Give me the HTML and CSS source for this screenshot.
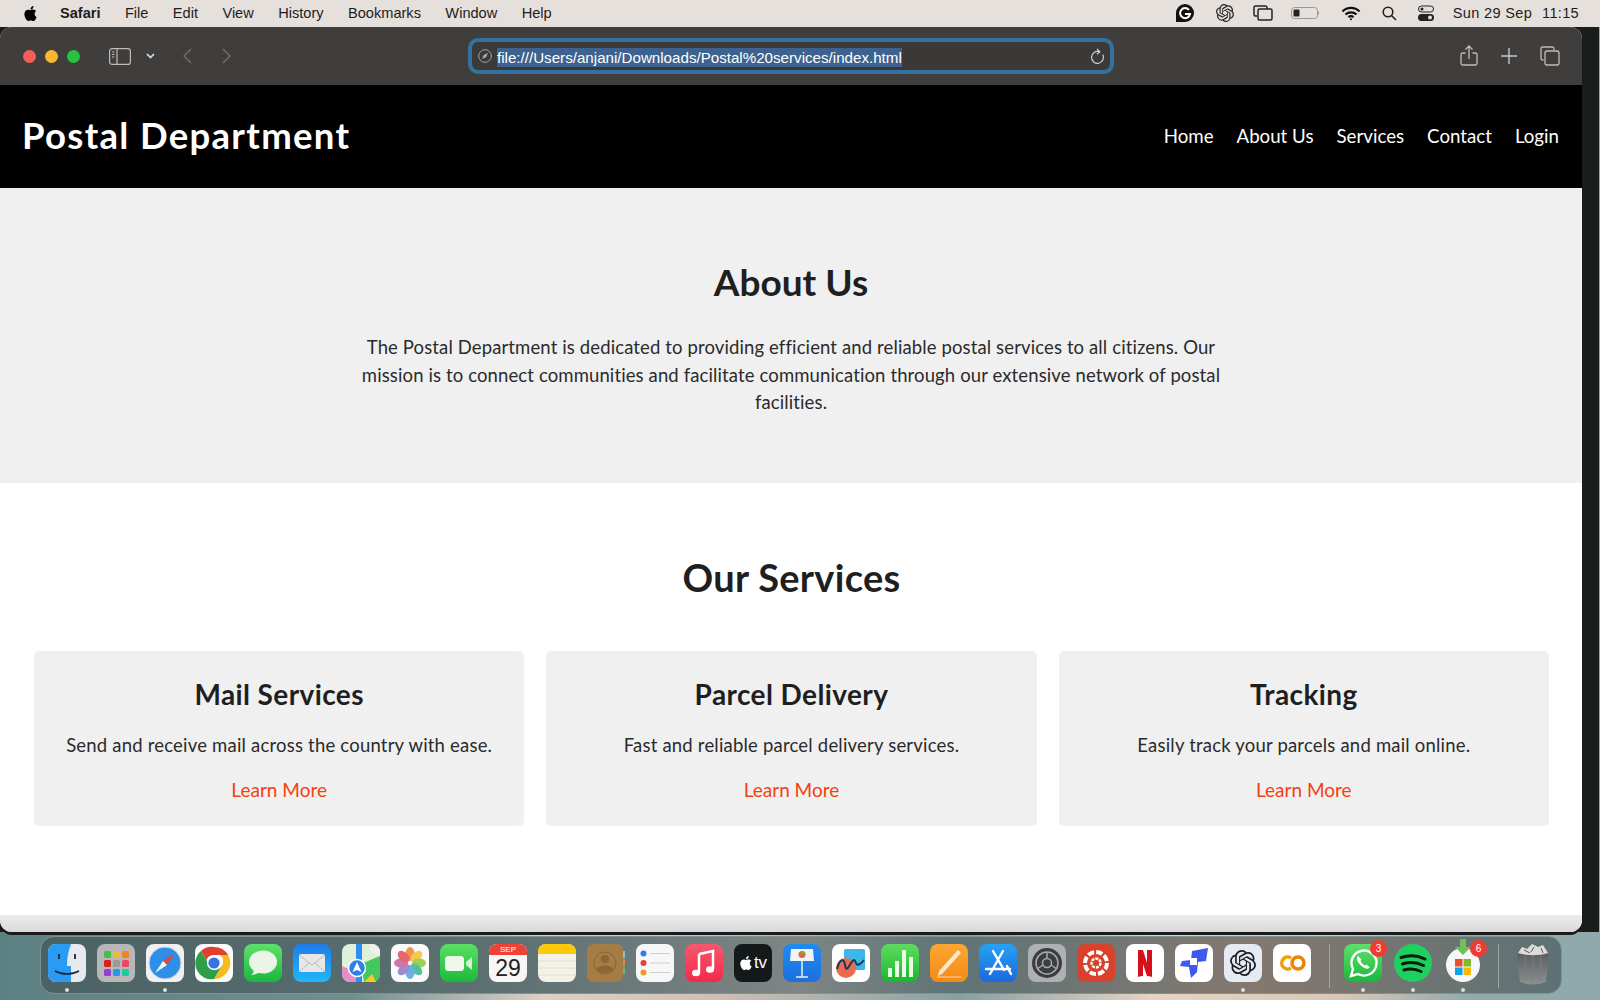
FILE: index.html
```html
<!DOCTYPE html>
<html lang="en">
<head>
    <meta charset="UTF-8">
    <title>Postal Department</title>
    <link rel="stylesheet" href="styles.css">
</head>
<body>
    <header class="menubar">
        <svg class="apple" viewBox="0 0 24 24"><path d="M12.152 6.896c-.948 0-2.415-1.078-3.96-1.04-2.04.027-3.91 1.183-4.961 3.014-2.117 3.675-.546 9.103 1.519 12.09 1.013 1.454 2.208 3.09 3.792 3.039 1.52-.065 2.09-.987 3.935-.987 1.831 0 2.35.987 3.96.948 1.637-.026 2.676-1.48 3.676-2.948 1.156-1.688 1.636-3.325 1.662-3.415-.039-.013-3.182-1.221-3.22-4.857-.026-3.04 2.48-4.494 2.597-4.559-1.429-2.09-3.623-2.324-4.39-2.376-2-.156-3.675 1.09-4.61 1.09zM15.53 3.83c.843-1.012 1.4-2.427 1.245-3.83-1.207.052-2.662.805-3.532 1.818-.78.896-1.454 2.338-1.273 3.714 1.338.104 2.715-.688 3.559-1.701"/></svg>
        <nav class="menus">
            <b>Safari</b><span>File</span><span>Edit</span><span>View</span><span>History</span><span>Bookmarks</span><span>Window</span><span>Help</span>
        </nav>
        <div class="status">
            <svg width="20" height="20" viewBox="0 0 20 20"><path d="M10 1a9 9 0 1 1 0 18H1v-9a9 9 0 0 1 9-9z" fill="#111"/><path d="M14 7a5 5 0 1 0 1 4h-5" fill="none" stroke="#fff" stroke-width="2"/></svg>
            <svg width="18" height="18" viewBox="0 0 24 24" fill="#222"><path d="M22.2819 9.8211a5.9847 5.9847 0 0 0-.5157-4.9108 6.0462 6.0462 0 0 0-6.5098-2.9A6.0651 6.0651 0 0 0 4.9807 4.1818a5.9847 5.9847 0 0 0-3.9977 2.9 6.0462 6.0462 0 0 0 .7427 7.0966 5.98 5.98 0 0 0 .511 4.9107 6.051 6.051 0 0 0 6.5146 2.9001A5.9847 5.9847 0 0 0 13.2599 24a6.0557 6.0557 0 0 0 5.7718-4.2058 5.9894 5.9894 0 0 0 3.9977-2.9001 6.0557 6.0557 0 0 0-.7475-7.0729zm-9.022 12.6081a4.4755 4.4755 0 0 1-2.8764-1.0408l.1419-.0804 4.7783-2.7582a.7948.7948 0 0 0 .3927-.6813v-6.7369l2.02 1.1686a.071.071 0 0 1 .038.052v5.5826a4.504 4.504 0 0 1-4.4945 4.4944zm-9.6607-4.1254a4.4708 4.4708 0 0 1-.5346-3.0137l.142.0852 4.783 2.7582a.7712.7712 0 0 0 .7806 0l5.8428-3.3685v2.3324a.0804.0804 0 0 1-.0332.0615L9.74 19.9502a4.4992 4.4992 0 0 1-6.1408-1.6464zM2.3408 7.8956a4.485 4.485 0 0 1 2.3655-1.9728V11.6a.7664.7664 0 0 0 .3879.6765l5.8144 3.3543-2.0201 1.1685a.0757.0757 0 0 1-.071 0l-4.8303-2.7865A4.504 4.504 0 0 1 2.3408 7.872zm16.5963 3.8558L13.1038 8.364 15.1192 7.2a.0757.0757 0 0 1 .071 0l4.8303 2.7913a4.4944 4.4944 0 0 1-.6765 8.1042v-5.6772a.79.79 0 0 0-.407-.667zm2.0107-3.0231l-.142-.0852-4.7735-2.7818a.7759.7759 0 0 0-.7854 0L9.409 9.2297V6.8974a.0662.0662 0 0 1 .0284-.0615l4.8303-2.7866a4.4992 4.4992 0 0 1 6.6802 4.66zM8.3065 12.863l-2.02-1.1638a.0804.0804 0 0 1-.038-.0567V6.0742a4.4992 4.4992 0 0 1 7.3757-3.4537l-.142.0805L8.704 5.459a.7948.7948 0 0 0-.3927.6813zm1.0976-2.3654l2.602-1.4998 2.6069 1.4998v2.9994l-2.5974 1.4997-2.6067-1.4997Z"/></svg>
            <svg class="status-tabs" width="20" height="18" viewBox="0 0 20 18" fill="none" stroke="#222" stroke-width="1.500"><path d="M4 12H2.500A1.500 1.500 0 0 1 1 10.500v-7A1.500 1.500 0 0 1 2.500 2h10A1.500 1.500 0 0 1 14 3.500V5"/><rect x="5" y="5" width="14" height="11" rx="1.500"/></svg>
            <svg width="29" height="14" viewBox="0 0 29 14"><rect x=".5" y="1.500" width="26" height="11" rx="3" fill="none" stroke="#999"/><rect x="2.500" y="3.500" width="6" height="7" rx="1" fill="#222"/><path d="M27.500 5.500v3" stroke="#999"/></svg>
            <svg width="20" height="15" viewBox="0 0 20 15" fill="none" stroke="#111" stroke-width="2.200"><path d="M1.500 5.500a12 12 0 0 1 17 0M4.500 8.500a8 8 0 0 1 11 0M7.500 11.200a3.500 3.500 0 0 1 5 0"/><circle cx="10" cy="13.300" r="1" fill="#111" stroke="none"/></svg>
            <svg width="15" height="15" viewBox="0 0 15 15" fill="none" stroke="#222" stroke-width="1.600"><circle cx="6" cy="6" r="4.800"/><path d="M9.500 9.500l4.500 4.500"/></svg>
            <svg width="16" height="16" viewBox="0 0 16 16"><rect x=".5" y="1" width="15" height="6" rx="3" fill="none" stroke="#222"/><circle cx="4" cy="4" r="1.500" fill="#222"/><rect y="9" width="16" height="7" rx="3.500" fill="#222"/><circle cx="12" cy="12.500" r="2" fill="#e6e0dc"/></svg>
            <span class="clock"><span>Sun 29 Sep</span><span>11:15</span></span>
        </div>
    </header>

    <main class="desktop">
        <div class="window">
            <div class="toolbar">
                <div class="tool-left">
                    <span class="light red"></span><span class="light yellow"></span><span class="light green"></span>
                    <svg class="sidebar-icon" width="22" height="17" viewBox="0 0 22 17" fill="none" stroke="#bdbcbb" stroke-width="1.200"><rect x=".6" y=".6" width="20.800" height="15.800" rx="2.500"/><path d="M8 .6v15.800M3 4h2.500M3 6.500h2.500M3 9h2.500"/></svg>
                    <svg class="chevron" width="9" height="6" viewBox="0 0 9 6" fill="none" stroke="#ddd" stroke-width="1.700"><path d="M1 1l3.500 3.500L8 1"/></svg>
                    <svg class="back" width="10" height="16" viewBox="0 0 10 16" fill="none" stroke="#6d6c6b" stroke-width="1.500"><path d="M9 1L2 8l7 7"/></svg>
                    <svg class="forward" width="10" height="16" viewBox="0 0 10 16" fill="none" stroke="#6d6c6b" stroke-width="1.500"><path d="M1 1l7 7-7 7"/></svg>
                </div>
                <div class="urlbar">
                    <svg width="14" height="14" viewBox="0 0 14 14" fill="none" stroke="#a9a8a7"><circle cx="7" cy="7" r="6.300"/><path d="M4 10l1.800-4.200L10 4 8.200 8.200z" fill="#a9a8a7" stroke="none"/></svg>
                    <span class="url-text">file:///Users/anjani/Downloads/Postal%20services/index.html</span>
                    <svg class="reload" width="15" height="17" viewBox="0 0 15 17" fill="none" stroke="#d0cfce" stroke-width="1.200"><path d="M12.800 6.500a6 6 0 1 1-3.300-2.800"/><path d="M7 1l2.800 2.700L7 6.200"/></svg>
                </div>
                <div class="tool-right">
                    <svg width="18" height="22" viewBox="0 0 18 22" fill="none" stroke="#bdbcbb" stroke-width="1.300"><path d="M5.500 8H2.500A1.500 1.500 0 0 0 1 9.500v9A1.500 1.500 0 0 0 2.500 20h13a1.500 1.500 0 0 0 1.500-1.500v-9A1.500 1.500 0 0 0 15.500 8h-3M9 14V1M5.500 4.500L9 1l3.500 3.500"/></svg>
                    <svg width="16" height="16" viewBox="0 0 16 16" fill="none" stroke="#c8c7c6" stroke-width="1.400"><path d="M8 0v16M0 8h16"/></svg>
                    <svg width="20" height="20" viewBox="0 0 20 20" fill="none" stroke="#bdbcbb" stroke-width="1.300"><path d="M3.500 14H2.500A1.500 1.500 0 0 1 1 12.500v-10A1.500 1.500 0 0 1 2.500 1h10A1.500 1.500 0 0 1 14 2.500V4"/><rect x="5" y="5" width="14" height="14" rx="2"/></svg>
                </div>
            </div>

            <div class="site-nav">
                <h1 class="brand">Postal Department</h1>
                <nav class="site-links">
                    <a href="#">Home</a>
                    <a href="#">About Us</a>
                    <a href="#">Services</a>
                    <a href="#">Contact</a>
                    <a href="#">Login</a>
                </nav>
            </div>

            <section class="about">
                <h2>About Us</h2>
                <p>The Postal Department is dedicated to providing efficient and reliable postal services to all citizens. Our mission is to connect communities and facilitate communication through our extensive network of postal facilities.</p>
            </section>

            <section class="services">
                <h2>Our Services</h2>
                <div class="cards">
                    <div class="card">
                        <h3>Mail Services</h3>
                        <p>Send and receive mail across the country with ease.</p>
                        <a href="#">Learn More</a>
                    </div>
                    <div class="card">
                        <h3>Parcel Delivery</h3>
                        <p>Fast and reliable parcel delivery services.</p>
                        <a href="#">Learn More</a>
                    </div>
                    <div class="card">
                        <h3>Tracking</h3>
                        <p>Easily track your parcels and mail online.</p>
                        <a href="#">Learn More</a>
                    </div>
                </div>
            </section>
            <div class="page-end"></div>
        </div>

        <div class="dock">
            <div class="app running"><svg viewBox="0 0 38 38"><rect width="38" height="38" rx="8" fill="#e6e9ee"/><path d="M8 0h15c-3 8-4 14-4 22h4v16H8a8 8 0 0 1-8-8V8a8 8 0 0 1 8-8z" fill="#2a9bf2"/><path d="M7 27c7 4 17 4 24 0" fill="none" stroke="#16253a" stroke-width="1.500"/><path d="M11 10v5M27 10v5" stroke="#16253a" stroke-width="1.800"/></svg></div>
            <div class="app"><svg viewBox="0 0 38 38"><rect width="38" height="38" rx="8" fill="#b9b7b5"/><g><rect x="7" y="7" width="7" height="7" rx="1.500" fill="#3fc04e"/><rect x="16" y="7" width="7" height="7" rx="1.500" fill="#f2b92c"/><rect x="25" y="7" width="7" height="7" rx="1.500" fill="#ee8422"/><rect x="7" y="16" width="7" height="7" rx="1.500" fill="#d9201e"/><rect x="16" y="16" width="7" height="7" rx="1.500" fill="#9b9a9a"/><rect x="25" y="16" width="7" height="7" rx="1.500" fill="#ea4768"/><rect x="7" y="25" width="7" height="7" rx="1.500" fill="#9640d0"/><rect x="16" y="25" width="7" height="7" rx="1.500" fill="#1e9bf0"/><rect x="25" y="25" width="7" height="7" rx="1.500" fill="#1fc7a4"/></g></svg></div>
            <div class="app running"><svg viewBox="0 0 38 38"><rect width="38" height="38" rx="8" fill="#f0f0f0"/><circle cx="19" cy="19" r="16" fill="#2e8fe8" stroke="#cfd6dd"/><path d="M29 9L17 17l4 4z" fill="#ef4136"/><path d="M9 29l8-12 4 4z" fill="#f4f4f4"/></svg></div>
            <div class="app"><svg viewBox="0 0 38 38"><rect width="38" height="38" rx="8" fill="#fafafa"/><path d="M19 3a16 16 0 0 1 14 8H19a8 8 0 0 0-7.500 5L6 7a16 16 0 0 1 13-4z" fill="#e0402f"/><path d="M33 11a16 16 0 0 1-14 24l7-12a8 8 0 0 0-1-12z" fill="#f6bb1c"/><path d="M19 35A16 16 0 0 1 6 7l6 10a8 8 0 0 0 14 6l-7 12z" fill="#2f9e48"/><circle cx="19" cy="19" r="7" fill="#fff"/><circle cx="19" cy="19" r="5.600" fill="#3672e0"/></svg></div>
            <div class="app"><svg viewBox="0 0 38 38"><defs><linearGradient id="gMsg" x1="0" y1="0" x2="0" y2="1"><stop offset="0" stop-color="#5fe06b"/><stop offset="1" stop-color="#19b83c"/></linearGradient></defs><rect width="38" height="38" rx="8" fill="url(#gMsg)"/><ellipse cx="19" cy="18" rx="14" ry="11.500" fill="#eaf5e6"/><path d="M10 25c0 3-1 5-3 6 4 0 7-2 9-3z" fill="#eaf5e6"/></svg></div>
            <div class="app"><svg viewBox="0 0 38 38"><defs><linearGradient id="gMail" x1="0" y1="0" x2="0" y2="1"><stop offset="0" stop-color="#1e7ce8"/><stop offset="1" stop-color="#21b6fa"/></linearGradient></defs><rect width="38" height="38" rx="8" fill="url(#gMail)"/><rect x="6" y="10" width="26" height="18" rx="2" fill="#e8e6e6"/><path d="M6 11l13 10 13-10M6 28l10-9M32 28l-10-9" fill="none" stroke="#b9bcc2"/></svg></div>
            <div class="app"><svg viewBox="0 0 38 38"><rect width="38" height="38" rx="8" fill="#dff0d8"/><path d="M0 22l14 6v10H8a8 8 0 0 1-8-8z" fill="#e18fc6"/><path d="M38 12v18a8 8 0 0 1-8 8h-8l-3-18z" fill="#43c85e"/><path d="M22 38l8-8 4 8z" fill="#f6c82c"/><path d="M14 0h6v38h-6z" fill="#2f8cf0"/><path d="M28 0a8 8 0 0 0 10 10V8a8 8 0 0 0-8-8z" fill="#f0f0ee"/><circle cx="15" cy="24" r="8.500" fill="#2f7fe8" stroke="#fff" stroke-width="1.500"/><path d="M15 18l4.500 10-4.500-2-4.500 2z" fill="#fff"/></svg></div>
            <div class="app"><svg viewBox="0 0 38 38"><rect width="38" height="38" rx="8" fill="#fbfbfb"/><g opacity=".88"><ellipse cx="19" cy="10" rx="4.500" ry="7" fill="#f0872e"/><ellipse cx="19" cy="10" rx="4.500" ry="7" fill="#f7c22f" transform="rotate(45 19 19)"/><ellipse cx="19" cy="10" rx="4.500" ry="7" fill="#95ca3f" transform="rotate(90 19 19)"/><ellipse cx="19" cy="10" rx="4.500" ry="7" fill="#3fb78e" transform="rotate(135 19 19)"/><ellipse cx="19" cy="10" rx="4.500" ry="7" fill="#58a6df" transform="rotate(180 19 19)"/><ellipse cx="19" cy="10" rx="4.500" ry="7" fill="#8f7cc9" transform="rotate(225 19 19)"/><ellipse cx="19" cy="10" rx="4.500" ry="7" fill="#c862a5" transform="rotate(270 19 19)"/><ellipse cx="19" cy="10" rx="4.500" ry="7" fill="#e5535a" transform="rotate(315 19 19)"/></g></svg></div>
            <div class="app"><svg viewBox="0 0 38 38"><defs><linearGradient id="gFace" x1="0" y1="0" x2="0" y2="1"><stop offset="0" stop-color="#5ae063"/><stop offset="1" stop-color="#1cb93c"/></linearGradient></defs><rect width="38" height="38" rx="8" fill="url(#gFace)"/><rect x="5" y="12" width="19" height="15" rx="3.500" fill="#eef7ea"/><path d="M26 18l6-5v13l-6-5z" fill="#d8efd3"/></svg></div>
            <div class="app app-date"><span class="month">SEP</span><span class="day">29</span></div>
            <div class="app"><svg viewBox="0 0 38 38"><rect width="38" height="38" rx="8" fill="#f3f1e8"/><path d="M0 10V8a8 8 0 0 1 8-8h22a8 8 0 0 1 8 8v2z" fill="#fdc908"/><path d="M0 17h38M0 24h38M0 31h38" stroke="#dcd9cf" stroke-width=".7"/></svg></div>
            <div class="app"><svg viewBox="0 0 38 38"><rect width="36" height="38" rx="6" fill="#a67c45"/><path d="M36 7h2v7h-2z" fill="#8cc0d6"/><path d="M36 15h2v7h-2z" fill="#e08a3a"/><path d="M36 23h2v7h-2z" fill="#6fb56d"/><circle cx="18" cy="19" r="11" fill="none" stroke="#8a6536"/><circle cx="18" cy="15" r="4" fill="#8a6536"/><path d="M9 26c2-6 16-6 18 0-5 4-13 4-18 0z" fill="#8a6536"/></svg></div>
            <div class="app"><svg viewBox="0 0 38 38"><rect width="38" height="38" rx="8" fill="#f7f7f7"/><circle cx="7.500" cy="9.500" r="3" fill="#2f7fe8"/><circle cx="7.500" cy="19" r="3" fill="#e5403a"/><circle cx="7.500" cy="28.500" r="3" fill="#f19a2c"/><path d="M14 9.500h20M14 19h20M14 28.500h20" stroke="#cfcfcf"/></svg></div>
            <div class="app"><svg viewBox="0 0 38 38"><defs><linearGradient id="gMusic" x1="0" y1="0" x2="0" y2="1"><stop offset="0" stop-color="#f6596e"/><stop offset="1" stop-color="#f5284a"/></linearGradient></defs><rect width="38" height="38" rx="8" fill="url(#gMusic)"/><path d="M14 10l14-3v18" fill="none" stroke="#fff" stroke-width="2.500"/><path d="M14 10v19" stroke="#fff" stroke-width="2.500"/><ellipse cx="11" cy="29" rx="4" ry="3.300" fill="#fff"/><ellipse cx="25" cy="25.500" rx="4" ry="3.300" fill="#fff"/></svg></div>
            <div class="app app-tv"><svg viewBox="0 0 24 24" width="14" height="14"><path fill="#fff" d="M12.152 6.896c-.948 0-2.415-1.078-3.96-1.04-2.04.027-3.91 1.183-4.961 3.014-2.117 3.675-.546 9.103 1.519 12.09 1.013 1.454 2.208 3.09 3.792 3.039 1.52-.065 2.09-.987 3.935-.987 1.831 0 2.35.987 3.96.948 1.637-.026 2.676-1.48 3.676-2.948 1.156-1.688 1.636-3.325 1.662-3.415-.039-.013-3.182-1.221-3.22-4.857-.026-3.04 2.48-4.494 2.597-4.559-1.429-2.09-3.623-2.324-4.39-2.376-2-.156-3.675 1.09-4.61 1.09zM15.53 3.83c.843-1.012 1.4-2.427 1.245-3.83-1.207.052-2.662.805-3.532 1.818-.78.896-1.454 2.338-1.273 3.714 1.338.104 2.715-.688 3.559-1.701"/></svg><span>tv</span></div>
            <div class="app"><svg viewBox="0 0 38 38"><defs><linearGradient id="gKey" x1="0" y1="0" x2="0" y2="1"><stop offset="0" stop-color="#1f8cf0"/><stop offset="1" stop-color="#1c6fde"/></linearGradient></defs><rect width="38" height="38" rx="8" fill="url(#gKey)"/><path d="M8 5h22l1 12H7z" fill="#f3f3f3"/><circle cx="19" cy="10.500" r="3.500" fill="#e4663f"/><path d="M19 10.500v-3.500a3.500 3.500 0 0 1 3.500 3.500z" fill="#59b757"/><path d="M19 17v16M13 33h12" stroke="#e9eef5" stroke-width="1.500"/></svg></div>
            <div class="app"><svg viewBox="0 0 38 38"><rect width="38" height="38" rx="8" fill="#fff"/><rect x="12" y="5" width="21" height="21" rx="1.500" fill="#3db6ea"/><circle cx="14" cy="24" r="10" fill="#ec6a50"/><path d="M5 25c3-11 7-11 8-4s3 3 6-2 4-3 5 0 4 2 8-3" fill="none" stroke="#153a5a" stroke-width="2"/></svg></div>
            <div class="app"><svg viewBox="0 0 38 38"><defs><linearGradient id="gNum" x1="0" y1="0" x2="0" y2="1"><stop offset="0" stop-color="#60dc5f"/><stop offset="1" stop-color="#18b72d"/></linearGradient></defs><rect width="38" height="38" rx="8" fill="url(#gNum)"/><path d="M7 24h4v9H7zM14 17h4v16h-4zM21 6h4v27h-4zM28 13h4v20h-4z" fill="#eafae6"/></svg></div>
            <div class="app"><svg viewBox="0 0 38 38"><defs><linearGradient id="gPages" x1="0" y1="0" x2="0" y2="1"><stop offset="0" stop-color="#faa732"/><stop offset="1" stop-color="#f58a14"/></linearGradient></defs><rect width="38" height="38" rx="8" fill="url(#gPages)"/><path d="M28 6l3 3-19 21-4 2 1-5z" fill="#fbe9cf"/><path d="M7 33h25" stroke="#fbd9a8"/></svg></div>
            <div class="app"><svg viewBox="0 0 38 38"><defs><linearGradient id="gStore" x1="0" y1="0" x2="0" y2="1"><stop offset="0" stop-color="#25a3f4"/><stop offset="1" stop-color="#1c68dc"/></linearGradient></defs><rect width="38" height="38" rx="8" fill="url(#gStore)"/><path d="M14 7l11 19M24 7L11 30M7 25h24M28 22l4 8" fill="none" stroke="#fff" stroke-width="2.400" stroke-linecap="round"/></svg></div>
            <div class="app"><svg viewBox="0 0 38 38"><rect width="38" height="38" rx="8" fill="#aeb1b3"/><circle cx="19" cy="19" r="15" fill="#3c3d3f"/><circle cx="19" cy="19" r="11" fill="none" stroke="#a9abad" stroke-width="1.500"/><circle cx="19" cy="19" r="4.500" fill="none" stroke="#a9abad" stroke-width="1.500"/><path d="M19 14.500V8M15 21l-6 4M23 21l6 4" stroke="#a9abad" stroke-width="1.500"/></svg></div>
            <div class="app"><svg viewBox="0 0 38 38"><rect width="38" height="38" rx="8" fill="#d8412b"/><circle cx="19" cy="19" r="4.500" fill="none" stroke="#fff" stroke-width="2.400" stroke-dasharray="3 1"/><circle cx="19" cy="19" r="11" fill="none" stroke="#fff" stroke-width="4" stroke-dasharray="6.500 2.100"/></svg></div>
            <div class="app"><svg viewBox="0 0 38 38"><rect width="38" height="38" rx="8" fill="#fff"/><path d="M12 6h5l4 13V6h5v27q-2.500-1-5-1l-4-12v12q-2.500 0-5 1z" fill="#d5101c"/></svg></div>
            <div class="app"><svg viewBox="0 0 38 38"><rect width="38" height="38" rx="8" fill="#fff"/><path d="M33 4l-2 13-8 1-1 10-6 6-2-11-9-1 2-5 9-1 1-9z" fill="#3d5af0"/><rect x="15" y="14" width="7" height="7" fill="#fff"/></svg></div>
            <div class="app running"><svg viewBox="0 0 38 38"><rect width="38" height="38" rx="8" fill="#e6ebf3"/><svg x="6" y="6" width="26" height="26" viewBox="0 0 24 24"><path fill="#1e2126" d="M22.2819 9.8211a5.9847 5.9847 0 0 0-.5157-4.9108 6.0462 6.0462 0 0 0-6.5098-2.9A6.0651 6.0651 0 0 0 4.9807 4.1818a5.9847 5.9847 0 0 0-3.9977 2.9 6.0462 6.0462 0 0 0 .7427 7.0966 5.98 5.98 0 0 0 .511 4.9107 6.051 6.051 0 0 0 6.5146 2.9001A5.9847 5.9847 0 0 0 13.2599 24a6.0557 6.0557 0 0 0 5.7718-4.2058 5.9894 5.9894 0 0 0 3.9977-2.9001 6.0557 6.0557 0 0 0-.7475-7.0729zm-9.022 12.6081a4.4755 4.4755 0 0 1-2.8764-1.0408l.1419-.0804 4.7783-2.7582a.7948.7948 0 0 0 .3927-.6813v-6.7369l2.02 1.1686a.071.071 0 0 1 .038.052v5.5826a4.504 4.504 0 0 1-4.4945 4.4944zm-9.6607-4.1254a4.4708 4.4708 0 0 1-.5346-3.0137l.142.0852 4.783 2.7582a.7712.7712 0 0 0 .7806 0l5.8428-3.3685v2.3324a.0804.0804 0 0 1-.0332.0615L9.74 19.9502a4.4992 4.4992 0 0 1-6.1408-1.6464zM2.3408 7.8956a4.485 4.485 0 0 1 2.3655-1.9728V11.6a.7664.7664 0 0 0 .3879.6765l5.8144 3.3543-2.0201 1.1685a.0757.0757 0 0 1-.071 0l-4.8303-2.7865A4.504 4.504 0 0 1 2.3408 7.872zm16.5963 3.8558L13.1038 8.364 15.1192 7.2a.0757.0757 0 0 1 .071 0l4.8303 2.7913a4.4944 4.4944 0 0 1-.6765 8.1042v-5.6772a.79.79 0 0 0-.407-.667zm2.0107-3.0231l-.142-.0852-4.7735-2.7818a.7759.7759 0 0 0-.7854 0L9.409 9.2297V6.8974a.0662.0662 0 0 1 .0284-.0615l4.8303-2.7866a4.4992 4.4992 0 0 1 6.6802 4.66zM8.3065 12.863l-2.02-1.1638a.0804.0804 0 0 1-.038-.0567V6.0742a4.4992 4.4992 0 0 1 7.3757-3.4537l-.142.0805L8.704 5.459a.7948.7948 0 0 0-.3927.6813zm1.0976-2.3654l2.602-1.4998 2.6069 1.4998v2.9994l-2.5974 1.4997-2.6067-1.4997Z"/></svg></svg></div>
            <div class="app"><svg viewBox="0 0 38 38"><rect width="38" height="38" rx="8" fill="#fff"/><path d="M18 14a6 6 0 1 0 0 10" fill="none" stroke="#f29d0c" stroke-width="3.500"/><circle cx="25" cy="19" r="6" fill="none" stroke="#e88608" stroke-width="3.500"/></svg></div>
            <div class="dock-sep"></div>
            <div class="app running badged"><svg viewBox="0 0 38 38"><defs><linearGradient id="gWa" x1="0" y1="0" x2="0" y2="1"><stop offset="0" stop-color="#5fe06b"/><stop offset="1" stop-color="#19b83c"/></linearGradient></defs><rect width="38" height="38" rx="8" fill="url(#gWa)"/><path d="M7 32l2-7a12.500 12.500 0 1 1 5 5z" fill="none" stroke="#fff" stroke-width="2.400"/><path d="M14 12c-2 2-1 6 3 9.500s7 4 9 2l-3.500-3-1.500 1c-2-1-3.500-2.500-4.500-4.500l1-1.500z" fill="#fff"/></svg><span class="badge">3</span></div>
            <div class="app running spotify"><svg viewBox="0 0 38 38"><circle cx="19" cy="19" r="19" fill="#1ed15f"/><path d="M7 13.500c9-3 17-2 24 1.500M8.500 20c8-2.500 15-1.500 21 1.500M10 26c6-2 12-1 17 1.500" fill="none" stroke="#0e1b12" stroke-width="3" stroke-linecap="round"/></svg></div>
            <div class="app running badged store"><svg viewBox="0 0 38 38"><circle cx="19" cy="21" r="17" fill="#f7f7f7"/><path d="M11 15h7.500v7.500H11z" fill="#ea4f2b"/><path d="M19.500 15H27v7.500h-7.500z" fill="#7fba2a"/><path d="M11 23.500h7.500V31H11z" fill="#0ca4ea"/><path d="M19.500 23.500H27V31h-7.500z" fill="#fdb90b"/></svg><svg class="store-arrow" width="16" height="16" viewBox="0 0 16 16"><path d="M5 0h6v8h5l-8 8-8-8h5z" fill="#6fbf5a"/></svg><span class="badge">6</span></div>
            <div class="dock-sep sep-end"></div>
            <div class="app"><svg viewBox="0 0 38 44" class="trash"><defs><linearGradient id="gBin" x1="0" y1="0" x2="0" y2="1"><stop offset="0" stop-color="#5d6062"/><stop offset="1" stop-color="#8d9091"/></linearGradient></defs><path d="M3 12h32l-3 28q-13 5-26 0z" fill="url(#gBin)"/><path d="M11 14l1 24M19 14v25M27 14l-1 24" stroke="#7b7e7f"/><path d="M4 11l4-6 5 2 5-5 6 3 5-2 5 8c-9 3-21 3-30 0z" fill="#dcdcdb"/><path d="M10 8l6 3M20 5l-3 5M27 6l2 5" stroke="#58595a"/></svg></div>
        </div>
    </main>
</body>
</html>
```
FILE: styles.css
```css
* {
    box-sizing: border-box;
}

html, body {
    margin: 0;
    height: 1000px;
    overflow: hidden;
}

body {
    font-family: "Lato", "Noto Sans", sans-serif;
    display: flex;
    flex-direction: column;
    color: #1f1f1f;
}

/* mac menu bar */
.menubar {
    height: 27px;
    flex: none;
    background: #e6e0dc;
    display: flex;
    align-items: center;
    padding: 0 0 1px 23px;
    font-family: "Liberation Sans", sans-serif;
    font-size: 14.600px;
    color: #1d1d1d;
}

.apple {
    width: 15px;
    height: 17px;
}

.menus {
    display: flex;
    gap: 24.400px;
    margin-left: 22px;
}

.status {
    margin-left: auto;
    padding-right: 21px;
    display: flex;
    align-items: center;
    gap: 21px;
}

.status-tabs {
    margin: 0 -3px 0 -2px;
}

.clock {
    display: flex;
    gap: 10px;
    margin-left: -2px;
    letter-spacing: .3px;
}

/* desktop and window */
.desktop {
    flex: 1;
    display: flex;
    flex-direction: column;
    background:
        linear-gradient(90deg, #1b1c1c, #1b1c1c) 0 0 / 1599px 905px no-repeat,
        linear-gradient(90deg, #5d8082 0, #6f8f90 22%, #dcd0c6 34%, #cdbfb4 45%, #86a0a2 60%, #e5d3c3 72%, #d8c6b6 84%, #8fa9ac 92%, #8fa9ac 100%);
}

.window {
    width: 1582px;
    height: 905px;
    flex: none;
    border-radius: 12px;
    overflow: hidden;
    background: #fff;
    display: flex;
    flex-direction: column;
    box-shadow: 0 3px 0 #1b1b1b;
}

.toolbar {
    height: 58px;
    flex: none;
    background: #3f3e3d;
    display: grid;
    grid-template-columns: 1fr 646px 1fr;
    align-items: center;
}

.tool-left {
    display: flex;
    align-items: center;
    padding-left: 23px;
}

.light {
    width: 13px;
    height: 13px;
    border-radius: 50%;
    margin-right: 9px;
}

.red { background: #f65d58; }
.yellow { background: #fdb52e; }
.green { background: #27c23f; }

.sidebar-icon { margin-left: 20px; }
.chevron { margin-left: 15px; }
.back { margin-left: 27px; }
.forward { margin-left: 30px; }

.urlbar {
    height: 36px;
    border: 4px solid #33729f;
    border-radius: 10px;
    background: #3a3938;
    display: flex;
    align-items: center;
    padding: 0 5px 0 6px;
    gap: 5px;
}

.url-text {
    font-family: "Liberation Sans", sans-serif;
    font-size: 15.150px;
    color: #fff;
    background: #3d628f;
    line-height: 19px;
    margin-top: 2px;
}

.reload {
    margin-left: auto;
}

.tool-right {
    display: flex;
    align-items: center;
    justify-content: flex-end;
    gap: 23px;
    padding-right: 22px;
}

/* the page itself */
.site-nav {
    height: 103px;
    flex: none;
    background: #000;
    color: #fff;
    display: flex;
    align-items: center;
    justify-content: space-between;
    padding: 0 23px 2px 22px;
}

.brand {
    margin: 0 0 2px;
    font-size: 36.500px;
    font-weight: 700;
    letter-spacing: 1.300px;
}

.site-links {
    display: flex;
    gap: 23px;
}

.site-links a {
    color: #fff;
    text-decoration: none;
    font-size: 18.700px;
}

.about {
    height: 295px;
    flex: none;
    background: #f0f0f0;
    text-align: center;
    padding-top: 70px;
}

.about h2,
.services h2 {
    margin: 0;
    font-size: 37px;
    line-height: 48px;
    font-weight: 700;
}

.services h2 {
    font-size: 38px;
    letter-spacing: .3px;
}

.about p {
    width: 870px;
    margin: 28px auto 0;
    font-size: 18.500px;
    line-height: 27.500px;
    letter-spacing: .12px;
    color: #2b2b2b;
}

.services {
    flex: 1;
    text-align: center;
    padding: 70px 33px 0 34px;
}

.cards {
    display: grid;
    grid-template-columns: repeat(3, 1fr);
    gap: 22px;
    margin-top: 50px;
}

.card {
    height: 175px;
    background: #f0f0f0;
    border-radius: 5px;
    padding-top: 26px;
}

.card h3 {
    margin: 0;
    font-size: 28px;
    line-height: 34px;
    font-weight: 700;
    letter-spacing: .4px;
}

.card p {
    margin: 22px 0 0;
    font-size: 18.500px;
    line-height: 24px;
    letter-spacing: .2px;
    color: #2b2b2b;
}

.card a {
    display: block;
    margin-top: 21px;
    color: #f4400f;
    text-decoration: none;
    font-size: 19px;
    line-height: 24px;
}

.page-end {
    height: 17px;
    flex: none;
    background: linear-gradient(#ececec, #d9d9d9);
}

/* dock */
.dock {
    width: 1522px;
    height: 58px;
    margin: 4px 0 0 40px;
    flex: none;
    border-radius: 14px;
    border: 1px solid #7d9292;
    background: linear-gradient(90deg, #4b6265 0, #5d7072 30%, #7f8584 50%, #5f7476 60%, #84786f 80%, #5d7174 100%);
    display: flex;
    align-items: flex-start;
    gap: 11px;
    padding: 7px 0 0 7px;
}

.app {
    width: 38px;
    height: 38px;
    flex: none;
    position: relative;
}

.app > svg {
    display: block;
    width: 38px;
    height: 38px;
}

.app.running::after {
    content: "";
    position: absolute;
    left: 17px;
    top: 44px;
    width: 4px;
    height: 4px;
    border-radius: 50%;
    background: #d8e0e0;
}

.app-date {
    background: #f6f6f6;
    border-radius: 8px;
    overflow: hidden;
    text-align: center;
    color: #222;
    font-family: "Liberation Sans", sans-serif;
}

.month {
    display: block;
    height: 11px;
    background: #ee4138;
    color: #fff;
    font-size: 8px;
    line-height: 11px;
}

.day {
    display: block;
    font-size: 23px;
    line-height: 26px;
}

.app-tv {
    background: #14191a;
    border-radius: 8px;
    display: flex;
    align-items: center;
    justify-content: center;
    gap: 1px;
    color: #fff;
    font-family: "Liberation Sans", sans-serif;
    font-size: 17px;
}

.app-tv > svg {
    width: 14px;
    height: 14px;
}

.dock-sep {
    width: 1px;
    height: 44px;
    flex: none;
    margin: 0 3px 0 7px;
    background: #9aa8a8;
}

.sep-end {
    margin: 0 4px 0 5px;
}

.spotify {
    margin: 0 1px;
}

.badge {
    position: absolute;
    top: -4px;
    right: -5px;
    width: 17px;
    height: 17px;
    border-radius: 50%;
    background: #ee3b36;
    color: #fff;
    font-family: "Liberation Sans", sans-serif;
    font-size: 10px;
    line-height: 17px;
    text-align: center;
}

.app > .store-arrow {
    position: absolute;
    top: -5px;
    left: 11px;
    width: 16px;
    height: 16px;
}

.app > .trash {
    height: 44px;
    margin-top: -2px;
}
```
